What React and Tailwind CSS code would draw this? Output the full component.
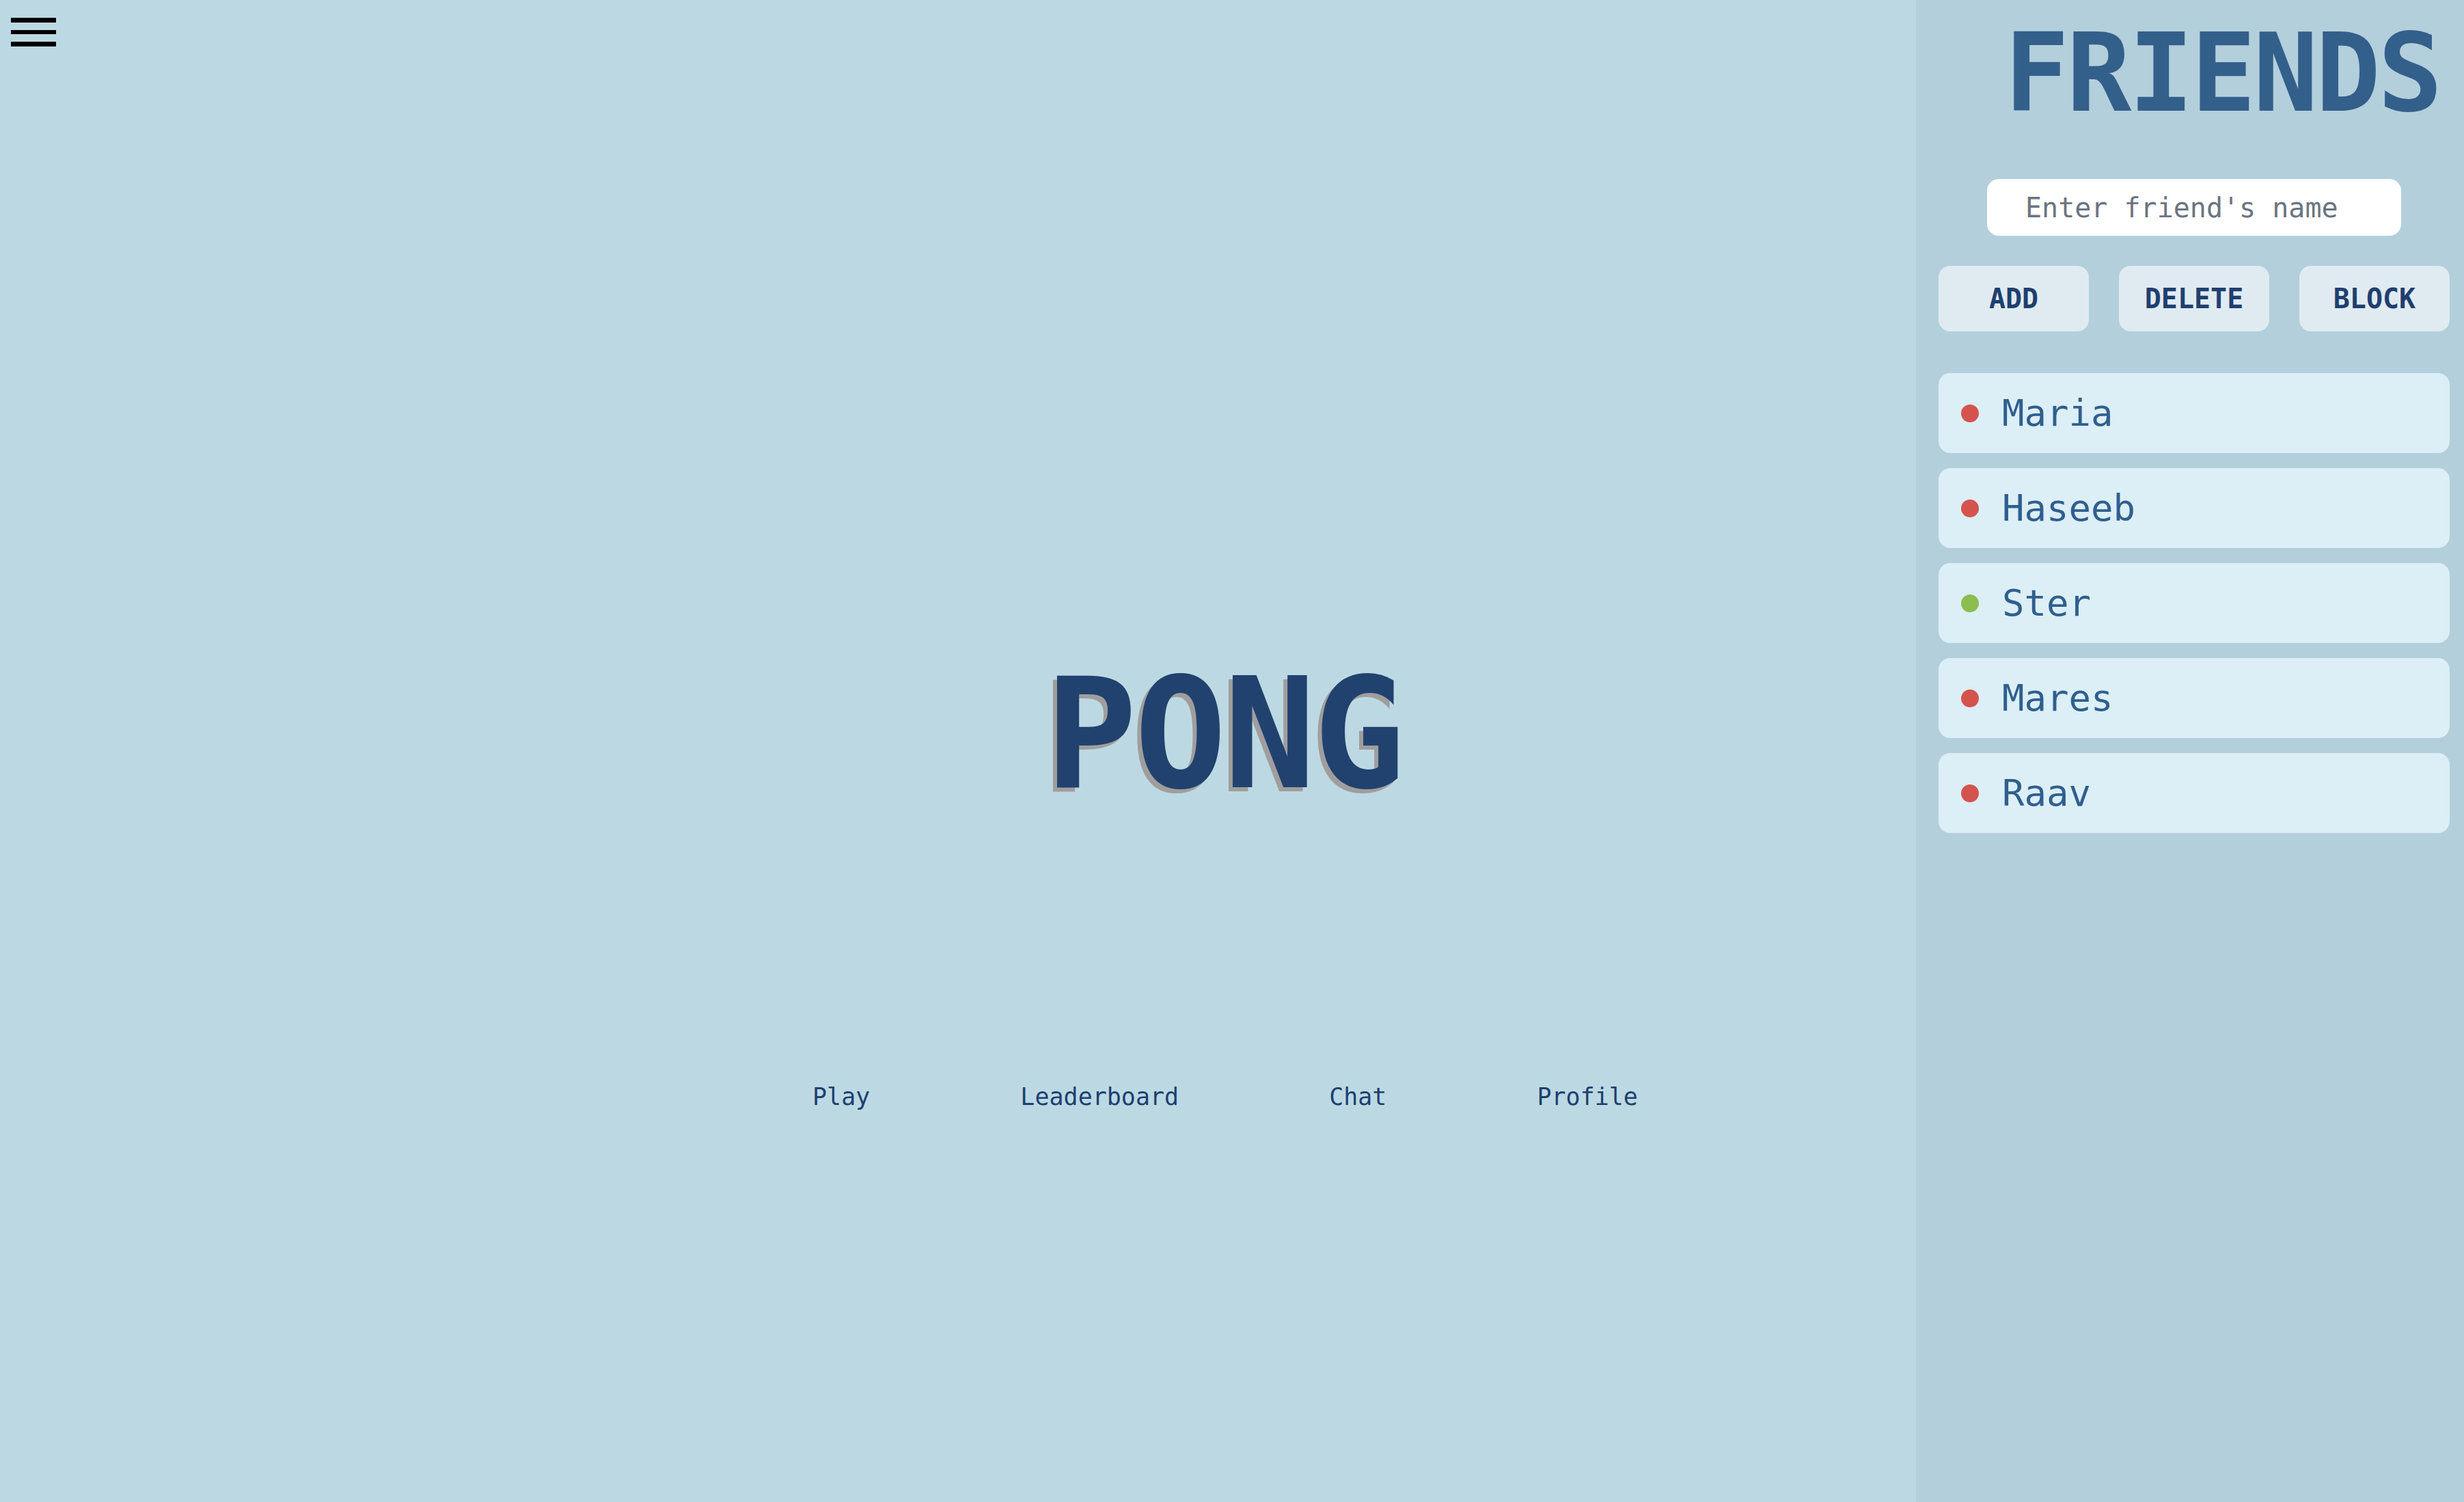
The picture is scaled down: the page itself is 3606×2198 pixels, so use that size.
import { useState } from 'react';

const friends = [
  { name: 'Maria', online: false },
  { name: 'Haseeb', online: false },
  { name: 'Ster', online: true },
  { name: 'Mares', online: false },
  { name: 'Raav', online: false },
];

const links = ['Play', 'Leaderboard', 'Chat', 'Profile'];

function FriendsPanel() {
  const [name, setName] = useState('');

  return (
    <aside className="absolute top-0 right-0 h-full w-[802px] bg-[#b3cfdb] pl-[33px] pr-[21px] flex flex-col">
      <h2 className="pt-[28px] pr-[14px] text-right text-[158px] leading-none font-bold tracking-[-4px] text-[#335f8b]">
        FRIENDS
      </h2>

      <div className="mt-[76px] flex justify-center">
        <input
          value={name}
          onChange={e => setName(e.target.value)}
          placeholder="Enter friend's name"
          className="w-[606px] h-[83px] rounded-[17px] bg-white pl-[56px] text-[40px] text-[#335f8b] placeholder:text-[#6b7480] outline-none"
        />
      </div>

      <div className="mt-[44px] flex justify-between">
        {['ADD', 'DELETE', 'BLOCK'].map(b => (
          <button
            key={b}
            className="w-[220px] h-[96px] rounded-[17px] bg-[#e0ebf1] text-[40px] font-bold text-[#1f3f6f]"
          >
            {b}
          </button>
        ))}
      </div>

      <ul className="mt-[61px] flex flex-col gap-[22px]">
        {friends.map(f => (
          <li key={f.name} className="h-[117px] rounded-[17px] bg-[#dceef6] pl-[33px] flex items-center gap-[34px]">
            <span className={f.online ? 'w-[26px] h-[26px] rounded-full bg-[#8bbd4f]' : 'w-[26px] h-[26px] rounded-full bg-[#d4534d]'} />
            <span className="text-[54px] leading-none text-[#2f5f8e]">{f.name}</span>
          </li>
        ))}
      </ul>
    </aside>
  );
}

export default function App() {
  return (
    <div className="relative w-full h-[2198px] overflow-hidden bg-[#bcd9e3] font-['DejaVu_Sans_Mono','Liberation_Mono',monospace]">
      <button className="absolute top-[26px] left-[16px] flex flex-col gap-[11px]">
        <span className="block w-[66px] h-[7px] bg-black" />
        <span className="block w-[66px] h-[6px] bg-black" />
        <span className="block w-[66px] h-[7px] bg-black" />
      </button>

      <main className="flex flex-col items-center pt-[963px]">
        <h1 className="pr-[24px] text-[224px] leading-none font-bold tracking-[-4px] text-[#21426f] [text-shadow:-6px_6px_0_#a09e9d]">
          PONG
        </h1>
        <nav className="mt-[401px] pr-[20px] flex gap-[220px]">
          {links.map(l => (
            <a key={l} href="#" className="text-[35px] leading-none text-[#1e3f70]">
              {l}
            </a>
          ))}
        </nav>
      </main>

      <FriendsPanel />
    </div>
  );
}
